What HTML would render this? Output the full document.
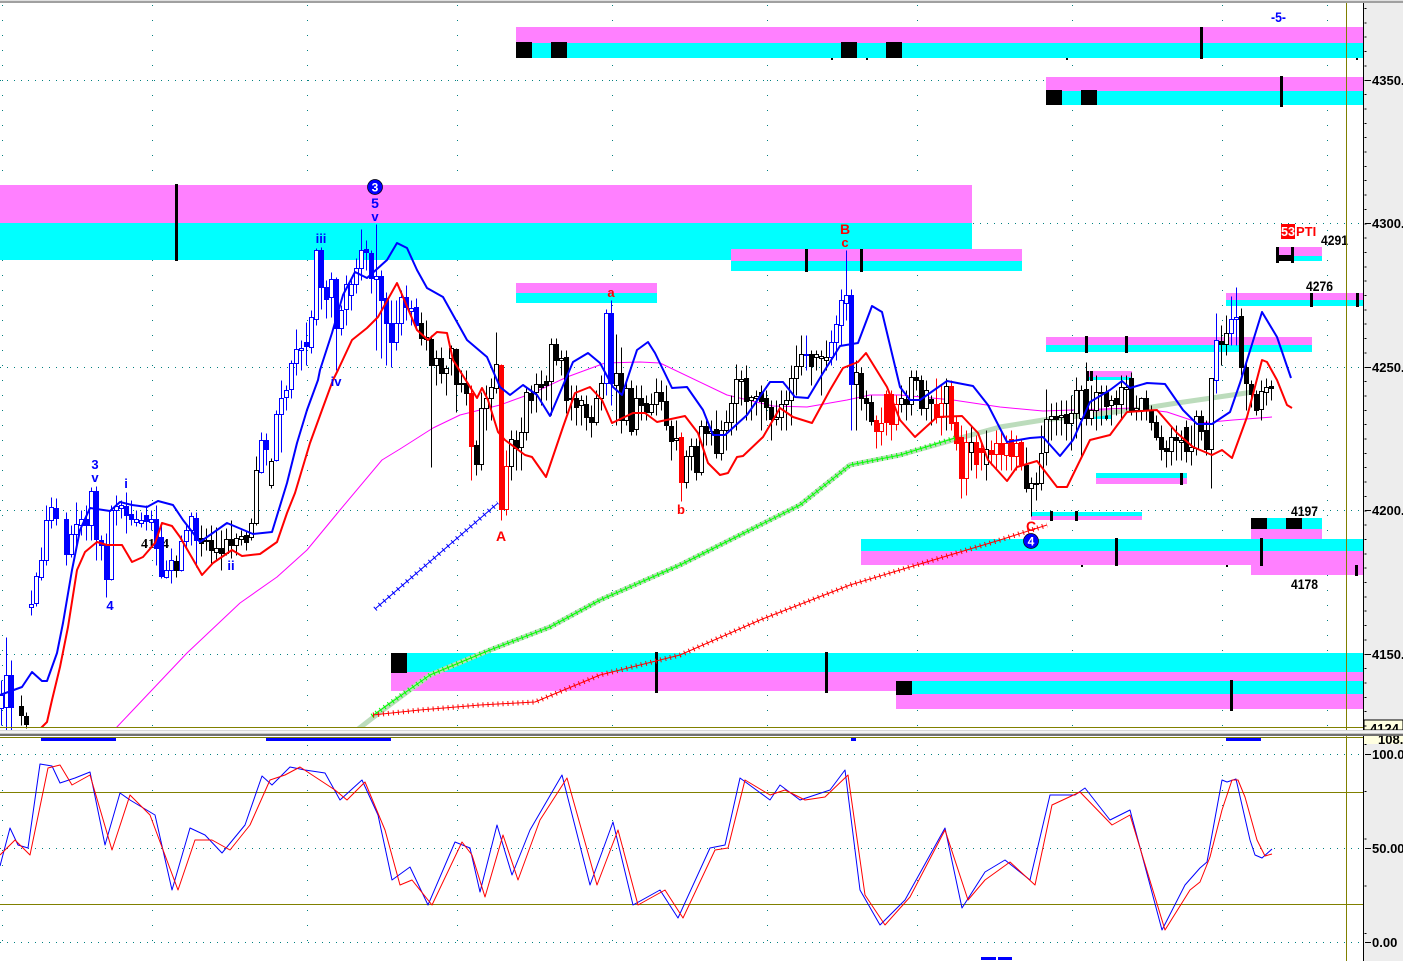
<!DOCTYPE html>
<html><head><meta charset="utf-8"><title>Chart</title>
<style>
html,body{margin:0;padding:0;background:#fff;width:1403px;height:961px;overflow:hidden}
svg{display:block}
text{font-family:"Liberation Sans",sans-serif}
.b{font-weight:bold;font-size:14px}
.ax{font-weight:bold;font-size:13px;fill:#000}
.lb{font-size:13px;font-weight:bold;text-anchor:middle;fill:#00f}
.lr{font-size:13px;font-weight:bold;text-anchor:middle;fill:#f00}
</style></head><body>
<svg width="1403" height="961" viewBox="0 0 1403 961" xmlns="http://www.w3.org/2000/svg">
<defs><clipPath id="m"><rect x="0" y="0" width="1363" height="728"/></clipPath></defs>
<rect x="0" y="0" width="1403" height="961" fill="#fff"/>
<rect x="1364" y="3" width="39" height="958" fill="#ededed"/>
<rect x="0" y="0" width="1403" height="3" fill="#a0a0a0"/>
<rect x="0" y="0" width="1403" height="1" fill="#e0e0e0"/>

<!-- grid -->
<g stroke="#008080" stroke-width="1" fill="none" stroke-dasharray="1 6" shape-rendering="crispEdges">
<path d="M0 80.5H1363M0 223.5H1363M0 367.5H1363M0 510.5H1363M0 654.5H1363M0 754.5H1363M0 848.5H1363M0 942.5H1363"/>
</g>
<g stroke="#008080" stroke-width="1" fill="none" stroke-dasharray="1 14" shape-rendering="crispEdges">
<path d="M2.5 5V728M152.5 5V728M307.5 5V728M457.5 5V728M612.5 5V728M767.5 5V728M917.5 5V728M1072.5 5V728M1222.5 5V728M1327.5 5V728"/>
<path d="M2.5 745V955M152.5 745V955M307.5 745V955M457.5 745V955M612.5 745V955M767.5 745V955M917.5 745V955M1072.5 745V955M1222.5 745V955"/>
</g>

<!-- bands -->
<g shape-rendering="crispEdges">
<rect x="516" y="27" width="847" height="16" fill="#ff80ff"/><rect x="516" y="43" width="847" height="15" fill="#0ff"/>
<rect x="1046" y="77" width="317" height="14" fill="#ff80ff"/><rect x="1046" y="91" width="317" height="14" fill="#0ff"/>
<rect x="0" y="185" width="972" height="38" fill="#ff80ff"/><rect x="0" y="223" width="972" height="37" fill="#0ff"/>
<rect x="731" y="249" width="291" height="12" fill="#ff80ff"/><rect x="731" y="261" width="291" height="10" fill="#0ff"/>
<rect x="516" y="283" width="141" height="10" fill="#ff80ff"/><rect x="516" y="293" width="141" height="10" fill="#0ff"/>
<rect x="1276" y="247" width="46" height="9" fill="#ff80ff"/><rect x="1276" y="256" width="46" height="5" fill="#0ff"/>
<rect x="1226" y="293" width="137" height="7" fill="#ff80ff"/><rect x="1226" y="300" width="137" height="6" fill="#0ff"/>
<rect x="1046" y="337" width="266" height="8" fill="#ff80ff"/><rect x="1046" y="345" width="266" height="7" fill="#0ff"/>
<rect x="1086" y="371" width="46" height="6" fill="#ff80ff"/><rect x="1086" y="377" width="46" height="3" fill="#0ff"/>
<rect x="1082" y="409" width="30" height="6" fill="#ff80ff"/><rect x="1082" y="415" width="30" height="4" fill="#0ff"/>
<rect x="1096" y="473" width="91" height="5" fill="#0ff"/><rect x="1096" y="478" width="91" height="6" fill="#ff80ff"/>
<rect x="1031" y="512" width="111" height="4" fill="#0ff"/><rect x="1031" y="516" width="111" height="4" fill="#ff80ff"/>
<rect x="1251" y="518" width="71" height="11" fill="#0ff"/><rect x="1251" y="529" width="71" height="10" fill="#ff80ff"/>
<rect x="861" y="539" width="502" height="12" fill="#0ff"/><rect x="861" y="551" width="502" height="14" fill="#ff80ff"/>
<rect x="1251" y="565" width="112" height="10" fill="#ff80ff"/>
<rect x="391" y="653" width="972" height="19" fill="#0ff"/><rect x="391" y="672" width="972" height="19" fill="#ff80ff"/>
<rect x="896" y="691" width="467" height="3" fill="#0ff"/>
<rect x="896" y="681" width="467" height="13" fill="#0ff"/><rect x="896" y="694" width="467" height="15" fill="#ff80ff"/>
<!-- squares and ticks -->
<g fill="#000">
<rect x="516" y="42" width="16" height="16"/><rect x="551" y="42" width="16" height="16"/><rect x="841" y="42" width="16" height="16"/><rect x="886" y="42" width="16" height="16"/>
<rect x="1200" y="27" width="3" height="32"/>
<rect x="1046" y="90" width="16" height="15"/><rect x="1081" y="90" width="16" height="15"/>
<rect x="1280" y="76" width="3" height="31"/>
<rect x="175" y="184" width="3" height="77"/>
<rect x="805" y="249" width="3" height="23"/><rect x="860" y="249" width="3" height="23"/>
<rect x="1276" y="247" width="3" height="16"/><rect x="1291" y="247" width="3" height="16"/><rect x="1276" y="255" width="18" height="6"/>
<rect x="1310" y="293" width="3" height="14"/><rect x="1356" y="293" width="3" height="14"/>
<rect x="1085" y="336" width="3" height="17"/><rect x="1125" y="336" width="3" height="17"/>
<rect x="1086" y="371" width="3" height="10"/><rect x="1090" y="371" width="3" height="10"/>
<rect x="1080" y="409" width="3" height="11"/><rect x="1105" y="414" width="3" height="5"/>
<rect x="1180" y="473" width="3" height="12"/>
<rect x="1050" y="511" width="3" height="10"/><rect x="1075" y="511" width="3" height="10"/>
<rect x="1251" y="518" width="16" height="11"/><rect x="1286" y="518" width="16" height="11"/>
<rect x="1115" y="538" width="3" height="28"/><rect x="1260" y="538" width="3" height="28"/><rect x="1355" y="565" width="3" height="11"/>
<rect x="391" y="653" width="16" height="20"/><rect x="655" y="652" width="3" height="41"/><rect x="825" y="652" width="3" height="41"/>
<rect x="896" y="681" width="16" height="14"/><rect x="1230" y="680" width="3" height="31"/>
<rect x="831" y="58" width="2" height="2"/><rect x="866" y="58" width="2" height="2"/><rect x="1066" y="58" width="2" height="2"/><rect x="1356" y="58" width="2" height="2"/><rect x="1081" y="565" width="2" height="2"/><rect x="1226" y="565" width="2" height="2"/>
</g>
</g>

<text x="141" y="548" font-weight="bold" font-size="14" fill="#000" style="font-family:'Liberation Serif',serif">4124</text>

<g clip-path="url(#m)" fill="none" stroke-linejoin="round">
<!-- pale green MA -->
<polyline stroke="#bcdcbc" stroke-width="5" points="357,730 375,716 430,675 490,650 550,627 600,600 680,565 740,535 800,505 850,465 900,455 953,440 1000,427 1043,420 1133,410 1177,403 1253,392"/>
<!-- magenta MA -->
<polyline stroke="#f0f" stroke-width="1" points="116,728 187,653 240,603 277,577 307,550 340,510 382,460 400,449 433,428 460,415 500,405 533,393 567,377 605,363 640,362 660,363 727,395 773,406 807,407 847,400 870,395 900,395 953,400 1000,407 1043,411 1133,408 1167,412 1200,423 1233,420 1272,417"/>
</g>

<!-- candles -->
<g transform="translate(.5 .5)" stroke-width="1" shape-rendering="crispEdges">
<path fill="#fff" stroke="#00f" d="M1 680V695M1 708V725M-1 695h4V708h-4zM6 637V675M6 707V730M4 675h4V707h-4zM31 590V604M31 607V615M29 604h4V607h-4zM36 572V576M36 603V606M34 576h4V603h-4zM41 547V560M41 577V580M39 560h4V577h-4zM46 505V520M46 560V565M44 520h4V560h-4zM51 497V507M51 520V528M49 507h4V520h-4zM71 525V534M71 554V557M69 534h4V554h-4zM76 502V524M76 534V550M74 524h4V534h-4zM81 510V519M81 525V535M79 519h4V525h-4zM91 487V491M91 525V540M89 491h4V525h-4zM111 505V510M111 579V580M109 510h4V579h-4zM116 495V506M116 510V525M114 506h4V510h-4zM121 500V505M121 508V518M119 505h4V508h-4zM136 510V519M136 522V526M134 519h4V522h-4zM141 512V520M141 523V527M139 520h4V523h-4zM151 510V519M151 522V530M149 519h4V522h-4zM166 560V570M166 577V578M164 570h4V577h-4zM171 548V560M171 570V583M169 560h4V570h-4zM181 535V541M181 570V571M179 541h4V570h-4zM186 525V530M186 541V548M184 530h4V541h-4zM191 512V516M191 530V545M189 516h4V530h-4zM261 432V440M261 472V473M259 440h4V472h-4zM276 410V414M276 460V461M274 414h4V460h-4zM281 380V398M281 414V452M279 398h4V414h-4zM286 385V390M286 397V410M284 390h4V397h-4zM291 360V363M291 389V398M289 363h4V389h-4zM296 329V349M296 363V375M294 349h4V363h-4zM301 340V348M301 350V370M299 348h4V350h-4zM311 310V317M311 347V353M309 317h4V347h-4zM316 248V250M316 319V325M314 250h4V319h-4zM331 272V279M331 297V317M329 279h4V297h-4zM341 305V310M341 328V335M339 310h4V328h-4zM346 275V284M346 309V325M344 284h4V309h-4zM351 280V284M351 295V310M349 284h4V295h-4zM356 258V268M356 284V293M354 268h4V284h-4zM361 229V250M361 268V280M359 250h4V268h-4zM376 224V276M376 279V350M374 276h4V279h-4zM396 300V323M396 342V350M394 323h4V342h-4zM401 290V297M401 323V335M399 297h4V323h-4zM411 300V308M411 311V325M409 308h4V311h-4zM606 309V313M606 383V395M604 313h4V383h-4zM806 335V354M806 355V370M804 354h4V355h-4zM831 330V342M831 357V365M829 342h4V357h-4zM836 315V324M836 342V360M834 324h4V342h-4zM841 289V300M841 325V345M839 300h4V325h-4zM846 250V295M846 303V320M844 295h4V303h-4zM1216 313V340M1216 380V393M1214 340h4V380h-4zM1231 296V319M1231 333V345M1229 319h4V333h-4zM1236 287V317M1236 319V345M1234 317h4V319h-4z"/>
<path fill="#00f" stroke="#00f" d="M11 660V675M11 707V730M9 675h4V707h-4zM56 498V508M56 518V525M54 508h4V518h-4zM66 512V519M66 554V565M64 519h4V554h-4zM86 505V519M86 525V540M84 519h4V525h-4zM96 486V491M96 539V560M94 491h4V539h-4zM101 535V540M101 545V560M99 540h4V545h-4zM106 533V545M106 579V597M104 545h4V579h-4zM126 492V506M126 515V533M124 506h4V515h-4zM131 500V514M131 519V525M129 514h4V519h-4zM146 505V515M146 521V530M144 515h4V521h-4zM156 505V519M156 548V565M154 519h4V548h-4zM161 525V537M161 576V578M159 537h4V576h-4zM196 512V518M196 540V567M194 518h4V540h-4zM266 433V440M266 449V465M264 440h4V449h-4zM306 322V342M306 346V365M304 342h4V346h-4zM321 247V250M321 287V309M319 250h4V287h-4zM326 280V287M326 299V318M324 287h4V299h-4zM336 277V279M336 328V370M334 279h4V328h-4zM366 240V249M366 252V270M364 249h4V252h-4zM371 250V253M371 278V293M369 253h4V278h-4zM381 270V276M381 300V358M379 276h4V300h-4zM386 292V298M386 323V365M384 298h4V323h-4zM391 300V323M391 342V367M389 323h4V342h-4zM406 285V297M406 307V320M404 297h4V307h-4zM416 298V307M416 325V328M414 307h4V325h-4zM611 300V313M611 383V405M609 313h4V383h-4zM851 289V295M851 384V430M849 295h4V384h-4z"/>
<path fill="#fff" stroke="#000" d="M206 528V540M206 541V550M204 540h4V541h-4zM216 527V548M216 552V560M214 548h4V552h-4zM226 528V539M226 553V555M224 539h4V553h-4zM236 533V538M236 545V555M234 538h4V545h-4zM241 530V536M241 539V545M239 536h4V539h-4zM251 518V523M251 537V540M249 523h4V537h-4zM256 456V470M256 523V525M254 470h4V523h-4zM271 458V461M271 485V488M269 461h4V485h-4zM426 320V337M426 339V350M424 337h4V339h-4zM436 350V358M436 365V385M434 358h4V365h-4zM446 365V368M446 373V395M444 368h4V373h-4zM451 345V348M451 358V375M449 348h4V358h-4zM461 370V383M461 384V392M459 383h4V384h-4zM481 392V408M481 464V470M479 408h4V464h-4zM486 385V398M486 408V430M484 398h4V408h-4zM491 378V387M491 398V420M489 387h4V398h-4zM496 332V364M496 388V393M494 364h4V388h-4zM511 430V439M511 466V480M509 439h4V466h-4zM521 417V432M521 447V470M519 432h4V447h-4zM526 388V392M526 432V440M524 392h4V432h-4zM536 373V384M536 392V412M534 384h4V392h-4zM551 338V344M551 381V415M549 344h4V381h-4zM561 350V358M561 360V375M559 358h4V360h-4zM571 385V398M571 399V420M569 398h4V399h-4zM581 395V400M581 405V425M579 400h4V405h-4zM596 390V398M596 422V425M594 398h4V422h-4zM601 375V383M601 398V410M599 383h4V398h-4zM616 334V373M616 385V425M614 373h4V385h-4zM626 380V388M626 420V425M624 388h4V420h-4zM636 385V398M636 429V435M634 398h4V429h-4zM651 393V404M651 412V415M649 404h4V412h-4zM656 378V392M656 404V415M654 392h4V404h-4zM676 420V438M676 440V450M674 438h4V440h-4zM686 450V456M686 482V488M684 456h4V482h-4zM691 438V446M691 456V470M689 446h4V456h-4zM701 420V426M701 472V475M699 426h4V472h-4zM711 420V431M711 433V445M709 431h4V433h-4zM721 420V430M721 453V460M719 430h4V453h-4zM726 410V422M726 430V450M724 422h4V430h-4zM731 395V403M731 422V435M729 403h4V422h-4zM736 364V379M736 403V430M734 379h4V403h-4zM741 370V379M741 381V405M739 379h4V381h-4zM751 395V397M751 400V420M749 397h4V400h-4zM756 390V396M756 398V415M754 396h4V398h-4zM776 400V417M776 419V425M774 417h4V419h-4zM781 390V404M781 417V430M779 404h4V417h-4zM786 390V400M786 404V430M784 400h4V404h-4zM791 365V378M791 400V425M789 378h4V400h-4zM796 345V366M796 378V395M794 366h4V378h-4zM801 335V354M801 366V375M799 354h4V366h-4zM816 350V354M816 357V370M814 354h4V357h-4zM821 350V356M821 358V395M819 356h4V358h-4zM826 340V357M826 360V370M824 357h4V360h-4zM856 360V372M856 384V430M854 372h4V384h-4zM901 385V398M901 404V412M899 398h4V404h-4zM911 370V377M911 404V415M909 377h4V404h-4zM926 380V390M926 408V420M924 390h4V408h-4zM946 378V386M946 403V430M944 386h4V403h-4zM971 425V442M971 452V470M969 442h4V452h-4zM986 430V449M986 464V480M984 449h4V464h-4zM1031 477V483M1031 488V516M1029 483h4V488h-4zM1036 472V483M1036 484V500M1034 483h4V484h-4zM1041 425V453M1041 483V490M1039 453h4V483h-4zM1046 389V419M1046 452V465M1044 419h4V452h-4zM1051 403V416M1051 419V440M1049 416h4V419h-4zM1061 400V415M1061 417V435M1059 415h4V417h-4zM1071 395V413M1071 423V450M1069 413h4V423h-4zM1076 377V390M1076 413V438M1074 390h4V413h-4zM1081 385V390M1081 418V458M1079 390h4V418h-4zM1091 385V410M1091 418V425M1089 410h4V418h-4zM1096 375V392M1096 410V430M1094 392h4V410h-4zM1101 385V392M1101 393V425M1099 392h4V393h-4zM1111 395V400M1111 405V425M1109 400h4V405h-4zM1121 375V387M1121 404V420M1119 387h4V404h-4zM1126 375V387M1126 389V410M1124 387h4V389h-4zM1136 395V408M1136 410V420M1134 408h4V410h-4zM1141 397V398M1141 410V420M1139 398h4V410h-4zM1171 425V437M1171 451V465M1169 437h4V451h-4zM1181 430V440M1181 442V460M1179 440h4V442h-4zM1191 425V447M1191 451V465M1189 447h4V451h-4zM1196 410V416M1196 448V455M1194 416h4V448h-4zM1211 378V378M1211 449V488M1209 378h4V449h-4zM1226 315V333M1226 344V355M1224 333h4V344h-4zM1261 380V391M1261 409V420M1259 391h4V409h-4zM1266 378V387M1266 392V405M1264 387h4V392h-4z"/>
<path fill="#000" stroke="#000" d="M21 695V706M21 715V725M19 706h4V715h-4zM26 712V716M26 724V728M24 716h4V724h-4zM176 555V561M176 570V577M174 561h4V570h-4zM201 525V538M201 543V556M199 538h4V543h-4zM211 525V540M211 550V563M209 540h4V550h-4zM221 530V548M221 553V570M219 548h4V553h-4zM231 520V539M231 545V558M229 539h4V545h-4zM246 530V535M246 542V550M244 535h4V542h-4zM421 312V323M421 338V345M419 323h4V338h-4zM431 335V339M431 365V467M429 339h4V365h-4zM441 347V358M441 373V383M439 358h4V373h-4zM456 348V349M456 384V412M454 349h4V384h-4zM466 370V383M466 393V405M464 383h4V393h-4zM476 440V445M476 464V475M474 445h4V464h-4zM516 430V440M516 448V470M514 440h4V448h-4zM531 385V393M531 400V413M529 393h4V400h-4zM541 370V384M541 387V405M539 384h4V387h-4zM546 375V381M546 385V400M544 381h4V385h-4zM556 338V344M556 360V365M554 344h4V360h-4zM566 350V357M566 400V413M564 357h4V400h-4zM576 385V398M576 407V425M574 398h4V407h-4zM586 395V404M586 417V430M584 404h4V417h-4zM591 405V417M591 422V437M589 417h4V422h-4zM621 347V373M621 420V433M619 373h4V420h-4zM631 380V388M631 431V435M629 388h4V431h-4zM641 385V398M641 405V420M639 398h4V405h-4zM646 395V403M646 412V420M644 403h4V412h-4zM661 380V392M661 401V410M659 392h4V401h-4zM666 385V401M666 425V430M664 401h4V425h-4zM671 420V426M671 441V460M669 426h4V441h-4zM696 438V446M696 472V480M694 446h4V472h-4zM706 420V426M706 433V445M704 426h4V433h-4zM716 410V429M716 453V458M714 429h4V453h-4zM746 365V378M746 401V420M744 378h4V401h-4zM761 385V392M761 401V430M759 392h4V401h-4zM766 390V398M766 407V420M764 398h4V407h-4zM771 400V407M771 419V440M769 407h4V419h-4zM811 350V354M811 366V385M809 354h4V366h-4zM861 367V373M861 398V410M859 373h4V398h-4zM866 390V398M866 403V420M864 398h4V403h-4zM871 395V402M871 421V425M869 402h4V421h-4zM906 390V399M906 404V420M904 399h4V404h-4zM916 370V377M916 380V390M914 377h4V380h-4zM921 375V380M921 408V415M919 380h4V408h-4zM931 395V399M931 403V425M929 399h4V403h-4zM1026 447V465M1026 488V492M1024 465h4V488h-4zM1056 402V416M1056 419V435M1054 416h4V419h-4zM1066 400V414M1066 423V440M1064 414h4V423h-4zM1086 362V389M1086 418V425M1084 389h4V418h-4zM1106 385V392M1106 406V420M1104 392h4V406h-4zM1116 390V398M1116 404V415M1114 398h4V404h-4zM1131 372V378M1131 410V415M1129 378h4V410h-4zM1146 390V398M1146 410V420M1144 398h4V410h-4zM1151 405V410M1151 422V430M1149 410h4V422h-4zM1156 415V422M1156 437V440M1154 422h4V437h-4zM1161 425V437M1161 449V460M1159 437h4V449h-4zM1166 440V448M1166 451V467M1164 448h4V451h-4zM1176 425V437M1176 440V460M1174 437h4V440h-4zM1186 420V427M1186 451V462M1184 427h4V451h-4zM1201 410V416M1201 431V440M1199 416h4V431h-4zM1206 420V430M1206 449V455M1204 430h4V449h-4zM1221 325V341M1221 344V365M1219 341h4V344h-4zM1241 308V316M1241 367V375M1239 316h4V367h-4zM1246 360V367M1246 383V410M1244 367h4V383h-4zM1251 380V384M1251 394V407M1249 384h4V394h-4zM1256 390V394M1256 410V415M1254 394h4V410h-4zM1271 380V386M1271 388V400M1269 386h4V388h-4z"/>
<path fill="#fff" stroke="#f00" d="M506 450V466M506 509V515M504 466h4V509h-4zM881 407V423M881 431V445M879 423h4V431h-4zM896 395V404M896 424V430M894 404h4V424h-4zM941 385V403M941 417V435M939 403h4V417h-4zM966 430V442M966 478V495M964 442h4V478h-4zM996 430V443M996 454V470M994 443h4V454h-4zM1006 435V443M1006 455V470M1004 443h4V455h-4zM1016 435V443M1016 456V470M1014 443h4V456h-4z"/>
<path fill="#f00" stroke="#f00" d="M471 385V393M471 446V480M469 393h4V446h-4zM501 364V365M501 509V520M499 365h4V509h-4zM681 432V437M681 482V501M679 437h4V482h-4zM876 415V420M876 431V448M874 420h4V431h-4zM886 390V394M886 422V435M884 394h4V422h-4zM891 390V394M891 424V440M889 394h4V424h-4zM936 378V404M936 417V423M934 404h4V417h-4zM951 380V386M951 423V430M949 386h4V423h-4zM956 415V422M956 443V450M954 422h4V443h-4zM961 425V437M961 478V498M959 437h4V478h-4zM976 435V442M976 464V478M974 442h4V464h-4zM981 440V448M981 452V470M979 448h4V452h-4zM991 440V450M991 454V465M989 450h4V454h-4zM1001 430V443M1001 454V470M999 443h4V454h-4zM1011 430V439M1011 456V470M1009 439h4V456h-4zM1021 438V442M1021 464V470M1019 442h4V464h-4z"/>
</g>

<g clip-path="url(#m)" fill="none" stroke-linejoin="round">
<!-- hatches -->
<polyline stroke="#0f0" stroke-width="1" points="372,716 430,675 490,650 550,627 600,600 680,565 740,535 800,505 850,465 900,455 955,438"/>
<polyline stroke="#0f0" stroke-width="5" stroke-dasharray="1 4" points="372,716 430,675 490,650 550,627 600,600 680,565 740,535 800,505 850,465 900,455 955,438"/>
<polyline stroke="#f00" stroke-width="1" points="373,715 420,710 480,705 535,702 600,675 680,655 760,620 850,585 900,570 1000,540 1047,525"/>
<polyline stroke="#f00" stroke-width="5" stroke-dasharray="1 4" points="373,715 420,710 480,705 535,702 600,675 680,655 760,620 850,585 900,570 1000,540 1047,525"/>
<polyline stroke="#00f" stroke-width="1" points="375,609 498,503"/>
<polyline stroke="#00f" stroke-width="5" stroke-dasharray="1 5" points="375,609 498,503"/>
<!-- blue MA -->
<polyline stroke="#00f" stroke-width="2" points="0,695 22,687 32,672 42,681 47,681 57,653 63,623 72,570 80,530 90,508 110,511 120,502 132,505 147,507 158,501 173,505 183,520 200,542 227,523 253,534 272,532 287,483 297,443 307,410 318,380 320,370 332,333 343,295 355,272 367,278 387,260 397,243 407,248 417,270 427,288 443,297 467,340 487,357 500,387 510,395 523,385 537,395 550,416 573,362 588,353 600,363 613,387 622,395 637,350 648,342 655,353 672,388 687,387 703,410 713,435 725,435 747,415 770,382 783,382 795,397 808,398 823,373 840,346 858,343 872,306 882,312 900,387 910,400 920,400 947,381 973,386 988,405 1007,442 1030,438 1043,437 1060,456 1073,440 1090,402 1110,390 1122,381 1130,388 1147,383 1165,384 1183,410 1197,424 1212,424 1230,412 1240,383 1262,312 1277,337 1291,378"/>
<!-- red MA -->
<polyline stroke="#f00" stroke-width="2" points="41,728 47,722 52,700 60,667 68,627 77,570 85,552 97,542 107,545 122,545 132,562 143,557 155,543 162,523 172,526 180,537 202,575 213,563 232,550 242,556 260,554 277,542 287,513 295,493 310,443 322,410 333,380 338,370 352,340 367,328 378,317 397,283 403,297 417,330 428,340 437,332 447,333 453,360 472,390 477,398 482,388 488,400 498,432 505,440 525,455 532,457 546,477 563,427 575,393 590,387 602,400 612,423 633,413 645,413 657,422 685,416 698,433 708,463 720,475 728,473 737,457 743,456 763,437 780,408 793,417 812,423 830,390 843,368 858,362 866,353 887,387 900,420 915,437 937,417 962,416 978,433 988,460 1007,481 1017,467 1037,461 1057,487 1067,487 1090,440 1110,435 1127,412 1157,410 1177,433 1193,447 1212,455 1222,450 1232,458 1247,417 1262,360 1267,362 1277,380 1287,405 1292,408"/>
</g>

<!-- chart labels -->
<text class="lb" x="95" y="469">3</text><text class="lb" x="95" y="482">v</text>
<text class="lb" x="110" y="610">4</text><text class="lb" x="126" y="488">i</text><text class="lb" x="231" y="570">ii</text>
<text class="lb" x="321" y="243">iii</text><text class="lb" x="336" y="386">iv</text>
<text class="lb" x="375" y="208" style="font-size:14px">5</text><text class="lb" x="375" y="221">v</text>
<text class="lr" x="501" y="541" style="font-size:14px">A</text><text class="lr" x="611" y="297">a</text><text class="lr" x="681" y="514">b</text>
<text class="lr" x="845" y="234" style="font-size:14px">B</text><text class="lr" x="845" y="247">c</text><text class="lr" x="1031" y="531" style="font-size:14px">C</text>
<circle cx="375" cy="187" r="7.5" fill="#00f" stroke="#000" stroke-width=".7"/><text x="375" y="191.5" font-size="12" font-weight="bold" fill="#fff" text-anchor="middle">3</text>
<circle cx="1031" cy="541" r="7.5" fill="#00f" stroke="#000" stroke-width=".7"/><text x="1031" y="545.5" font-size="12" font-weight="bold" fill="#fff" text-anchor="middle">4</text>
<rect x="1281" y="224" width="14" height="15" fill="#f00"/><text x="1281" y="236" font-size="13" font-weight="bold" fill="#fff" textLength="14" lengthAdjust="spacingAndGlyphs">53</text>
<text x="1296" y="236" font-size="13" font-weight="bold" fill="#f00">PTI</text>
<text x="1271" y="22" font-size="14" font-weight="bold" fill="#00f" textLength="15" lengthAdjust="spacingAndGlyphs">-5-</text>
<text class="b" x="1321" y="245" textLength="27" lengthAdjust="spacingAndGlyphs">4291</text><text class="b" x="1306" y="291" textLength="27" lengthAdjust="spacingAndGlyphs">4276</text><text class="b" x="1291" y="516" textLength="27" lengthAdjust="spacingAndGlyphs">4197</text><text class="b" x="1291" y="589" textLength="27" lengthAdjust="spacingAndGlyphs">4178</text>

<!-- lower panel -->
<g shape-rendering="crispEdges"><path d="M0 792.5H1363M0 904.5H1363" stroke="#808000" stroke-width="1"/></g>
<g fill="none" stroke-linejoin="round" stroke-width="1">
<polyline stroke="#00f" points="0,866 10,828 18,845 28,848 40,764 52,766 60,783 75,778 90,772 105,845 120,793 130,800 155,815 172,890 190,828 205,835 222,853 245,825 262,776 272,785 290,767 305,770 325,773 340,800 362,780 378,815 392,880 410,867 428,905 455,842 470,848 480,892 497,825 512,875 530,830 562,775 590,885 613,822 633,905 660,890 678,918 710,848 725,845 740,778 770,800 780,785 800,800 830,790 845,770 860,890 880,925 905,900 945,828 962,908 985,872 1005,860 1030,880 1050,795 1075,795 1085,788 1110,820 1130,810 1162,930 1185,885 1200,868 1207,862 1222,780 1227,782 1236,779 1250,840 1255,855 1262,858 1272,849"/>
<polyline stroke="#f00" points="0,855 15,840 30,855 48,768 60,765 72,785 90,775 112,850 130,795 150,815 178,890 195,840 212,840 230,850 250,825 270,780 285,775 300,767 335,790 347,800 365,782 385,830 400,885 412,880 432,905 462,842 472,855 485,897 503,835 518,880 540,820 567,778 597,885 618,830 638,905 665,890 683,918 715,850 728,848 745,780 770,795 785,790 805,800 825,797 848,775 865,895 885,925 910,897 945,830 968,900 985,880 1010,862 1035,885 1052,805 1080,792 1112,825 1130,815 1165,930 1190,890 1200,882 1210,857 1222,810 1232,780 1238,780 1245,797 1257,840 1265,856 1272,854"/>
</g>

<!-- axis -->
<rect x="1364" y="720" width="39" height="10" fill="#ffffe0" stroke="#000" stroke-width="1"/>
<rect x="1364" y="736" width="39" height="8" fill="#ffffe0"/>
<text class="ax" x="1370" y="733">4124</text>
<text class="ax" x="1378" y="744">108.3</text>
<g shape-rendering="crispEdges" fill="none">
<path d="M1363.5 3V961" stroke="#000" stroke-width="1"/>
<path d="M1365.5 8V728" stroke="#000" stroke-width="2" stroke-dasharray="1 13.35"/>
<path d="M1365.5 744V961" stroke="#000" stroke-width="2" stroke-dasharray="1 46.2"/>
<path d="M1365 80.5H1371M1365 223.5H1371M1365 367.5H1371M1365 510.5H1371M1365 654.5H1371M1365 754.5H1371M1365 848.5H1371M1365 942.5H1371" stroke="#000"/>
<path d="M1346.5 3V961" stroke="#808000" stroke-width="1"/>
<path d="M0 727.5H1363M0 737.5H1363" stroke="#808000"/>
</g>
<text class="ax" x="1372" y="85">4350.</text>
<text class="ax" x="1372" y="228">4300.</text>
<text class="ax" x="1372" y="372">4250.</text>
<text class="ax" x="1372" y="515">4200.</text>
<text class="ax" x="1372" y="659">4150.</text>
<text class="ax" x="1372" y="759">100.0</text>
<text class="ax" x="1372" y="853">50.00</text>
<text class="ax" x="1372" y="947">0.00</text>

<!-- divider -->
<g shape-rendering="crispEdges">
<rect x="0" y="730" width="1403" height="1" fill="#d8d8d8"/>
<rect x="0" y="731" width="1403" height="2" fill="#f4f4f4"/>
<rect x="0" y="733" width="1403" height="1" fill="#c8c8c8"/>
<rect x="0" y="734" width="1403" height="2" fill="#707070"/>
<g fill="#00f">
<rect x="41" y="738" width="75" height="3"/><rect x="266" y="738" width="125" height="3"/><rect x="851" y="738" width="5" height="3"/><rect x="1226" y="738" width="35" height="3"/>
<rect x="981" y="957" width="15" height="3"/><rect x="998" y="957" width="14" height="3"/>
</g>
</g>
</svg>
</body></html>
